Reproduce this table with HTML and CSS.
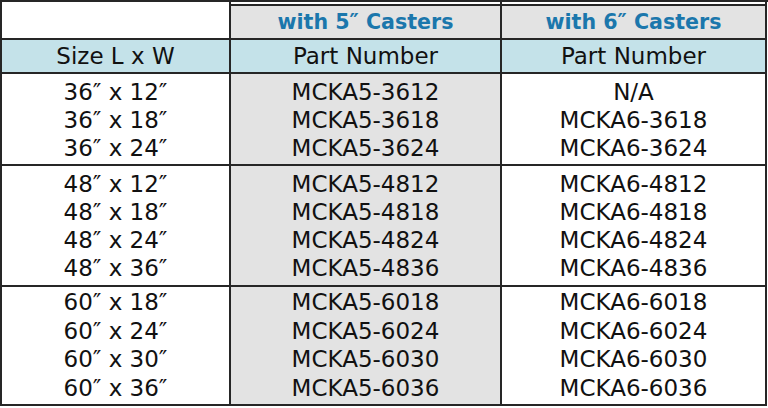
FILE: index.html
```html
<!DOCTYPE html>
<html lang="en">
<head>
<meta charset="utf-8">
<title>Caster Kit Part Numbers</title>
<link rel="stylesheet" href="styles.css">
</head>
<body>
<div class="sheet">
  <table class="parts">
    <colgroup>
      <col class="c-size">
      <col class="c-five">
      <col class="c-six">
    </colgroup>
    <thead>
      <tr class="r-caster">
        <th class="blank"></th>
        <th class="caster mid">with 5″ Casters</th>
        <th class="caster last">with 6″ Casters</th>
      </tr>
      <tr class="r-label">
        <th class="first">Size L x W</th>
        <th class="mid">Part Number</th>
        <th class="last">Part Number</th>
      </tr>
    </thead>
    <tbody class="g1">
      <tr><td class="first">36″ x 12″</td><td class="mid">MCKA5-3612</td><td class="last">N/A</td></tr>
      <tr><td class="first">36″ x 18″</td><td class="mid">MCKA5-3618</td><td class="last">MCKA6-3618</td></tr>
      <tr><td class="first">36″ x 24″</td><td class="mid">MCKA5-3624</td><td class="last">MCKA6-3624</td></tr>
    </tbody>
    <tbody class="g2">
      <tr><td class="first">48″ x 12″</td><td class="mid">MCKA5-4812</td><td class="last">MCKA6-4812</td></tr>
      <tr><td class="first">48″ x 18″</td><td class="mid">MCKA5-4818</td><td class="last">MCKA6-4818</td></tr>
      <tr><td class="first">48″ x 24″</td><td class="mid">MCKA5-4824</td><td class="last">MCKA6-4824</td></tr>
      <tr><td class="first">48″ x 36″</td><td class="mid">MCKA5-4836</td><td class="last">MCKA6-4836</td></tr>
    </tbody>
    <tbody class="g3">
      <tr><td class="first">60″ x 18″</td><td class="mid">MCKA5-6018</td><td class="last">MCKA6-6018</td></tr>
      <tr><td class="first">60″ x 24″</td><td class="mid">MCKA5-6024</td><td class="last">MCKA6-6024</td></tr>
      <tr><td class="first">60″ x 30″</td><td class="mid">MCKA5-6030</td><td class="last">MCKA6-6030</td></tr>
      <tr><td class="first">60″ x 36″</td><td class="mid">MCKA5-6036</td><td class="last">MCKA6-6036</td></tr>
    </tbody>
  </table>
</div>
</body>
</html>
```

FILE: styles.css
```css
html, body {
  margin: 0;
  padding: 0;
  background: #ececec;
}

.sheet {
  width: 768px;
  height: 408px;
  background: #fff;
  border-top: 2px solid #262626;
  box-sizing: border-box;
}

.parts {
  width: 767px;
  table-layout: fixed;
  border-collapse: separate;
  border-spacing: 0;
  font-family: "DejaVu Sans", "Liberation Sans", sans-serif;
  font-size: 23px;
  color: #111;
  background: #fff;
}

.c-size { width: 229px; }
.c-five { width: 271px; }
.c-six { width: 267px; }

.parts th,
.parts td {
  padding: 0;
  text-align: center;
  font-weight: normal;
  white-space: nowrap;
  box-sizing: border-box;
}

.first { border-left: 2px solid #262626; }
.mid { border-left: 2px solid #262626; background: #e3e3e3; }
.last { border-left: 2px solid #262626; border-right: 2px solid #262626; }

/* top caster header row */
.r-caster th {
  height: 36px;
  vertical-align: bottom;
  line-height: 32px;
}
.r-caster .blank {
  border-left: 2px solid #262626;
  background: #fff;
}
.r-caster .caster {
  font-size: 20.6px;
  font-weight: bold;
  color: #1b77ac;
  background: linear-gradient(to bottom, #fff 0 2px, #262626 2px 4px, #e3e3e3 4px);
}

/* blue label row */
.r-label th {
  height: 34px;
  line-height: 32px;
  background: #c4e2e9;
  border-top: 2px solid #262626;
  vertical-align: middle;
}

/* body rows */
.parts td {
  height: 28px;
  line-height: 28px;
}
.g1 td, .g2 td { height: 28px; }
.g3 td { height: 28.5px; line-height: 28.5px; }

.g1 tr:first-child td { border-top: 2px solid #262626; height: 34px; padding-top: 4px; }
.g1 tr:last-child td { height: 30px; padding-bottom: 2px; }

.g2 tr:first-child td { border-top: 2px solid #262626; height: 33.5px; padding-top: 3.5px; }
.g2 tr:last-child td { height: 31.5px; padding-bottom: 3.5px; }

.g3 tr:first-child td { border-top: 2px solid #262626; height: 31.5px; padding-top: 1px; }
.g3 tr:last-child td { height: 32.5px; padding-bottom: 2px; border-bottom: 2px solid #262626; }
```
